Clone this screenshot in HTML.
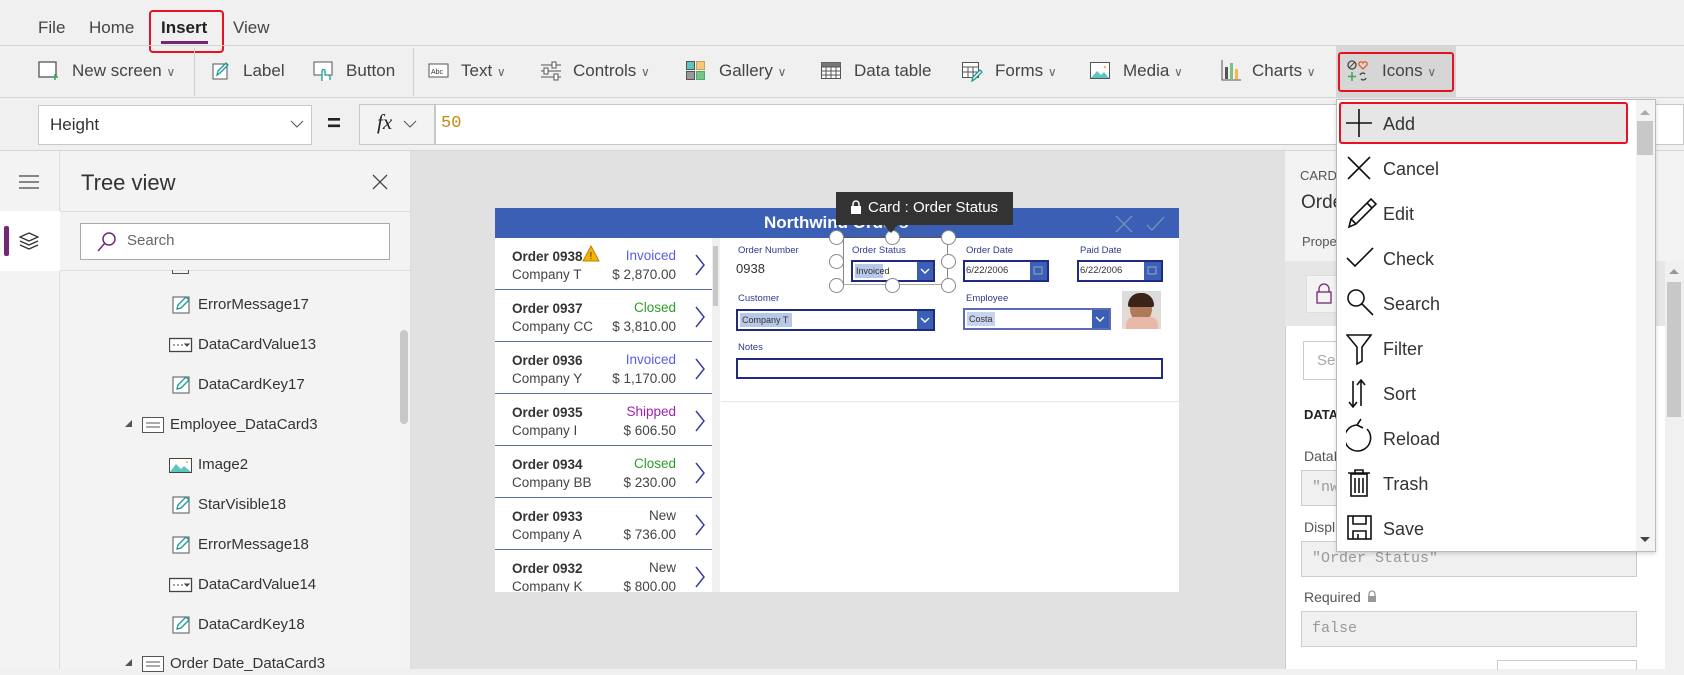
<!DOCTYPE html>
<html><head><meta charset="utf-8"><style>
*{box-sizing:border-box;margin:0;padding:0}
body{width:1684px;height:669px;overflow:hidden;background:#f0f0f0;font-family:"Liberation Sans",sans-serif;color:#333;position:relative}
.a{position:absolute}
.t{position:absolute;white-space:nowrap}
.tb{font-size:17px;color:#444;top:61px}
.chev{font-size:12px;color:#666}
.row{position:absolute;left:495px;width:217px;height:52px;border-bottom:1px solid #5c6bb0;background:#fff}
.row .o{position:absolute;left:17px;top:11px;font-size:13.5px;font-weight:bold;color:#333}
.row .c{position:absolute;left:17px;top:29px;font-size:13.5px;color:#444}
.row .s{position:absolute;right:36px;top:10px;font-size:13.5px}
.row .p{position:absolute;right:36px;top:29px;font-size:13.5px;color:#444}
.row svg{position:absolute;right:6px;top:16px}
.lbl{position:absolute;font-size:9.5px;color:#2d3a8c}
.box{position:absolute;border:2px solid #1f2a80;background:#fff}
.btn{position:absolute;background:#3a5fb5;top:0;bottom:0;right:0}
.h{position:absolute;width:15px;height:15px;border-radius:50%;border:1.5px solid #888;background:#fff}
.tree{position:absolute;font-size:15px;color:#333}
.dd{position:absolute;left:1383px;font-size:18px;color:#333}
.rp{position:absolute;font-size:14px;color:#555}
.inp{position:absolute;left:1301px;width:336px;height:36px;background:#f0f0f0;border:1px solid #ccc;font-family:"Liberation Mono",monospace;font-size:15px;color:#999;padding:8px 10px}
</style></head><body>
<!-- menu -->
<div class="t" style="left:38px;top:18px;font-size:17px;color:#444">File</div>
<div class="t" style="left:89px;top:18px;font-size:17px;color:#444">Home</div>
<div class="t" style="left:161px;top:18px;font-size:17px;color:#222;font-weight:bold">Insert</div>
<div class="t" style="left:233px;top:18px;font-size:17px;color:#444">View</div>
<div class="a" style="left:161px;top:41px;width:47px;height:3px;background:#742774"></div>
<div class="a" style="left:149px;top:10px;width:75px;height:43px;border:2px solid #e81123;border-radius:4px"></div>
<div class="a" style="left:0;top:45px;width:1684px;height:1px;background:#d6d6d6"></div>
<!-- toolbar -->
<div class="a" style="left:194px;top:48px;width:1px;height:48px;background:#d0d0d0"></div>
<div class="a" style="left:413px;top:48px;width:1px;height:48px;background:#d0d0d0"></div>
<svg class="a" style="left:38px;top:61px" width="22" height="20"><rect x="1" y="1" width="17" height="15" fill="#fff" stroke="#555" stroke-width="1.3"/><path d="M17 13v6M14 16h6" stroke="#3ba55c" stroke-width="1.5"/></svg>
<div class="t tb" style="left:72px">New screen <span class="chev">∨</span></div>
<svg class="a" style="left:212px;top:61px" width="18" height="19"><rect x="1" y="3" width="14" height="15" fill="#fff" stroke="#555"/><path d="M5 14l1-4 8-8 2 2-8 8z" fill="none" stroke="#1a9a94" stroke-width="1.3"/></svg>
<div class="t tb" style="left:243px">Label</div>
<svg class="a" style="left:313px;top:61px" width="22" height="22"><rect x="1" y="1" width="18" height="13" fill="#fff" stroke="#555"/><path d="M9 20v-10a1.5 1.5 0 013 0v4h3a2 2 0 012 2v3" fill="#fff" stroke="#1a9a94" stroke-width="1.3"/></svg>
<div class="t tb" style="left:346px">Button</div>
<svg class="a" style="left:428px;top:63px" width="22" height="16"><rect x="1" y="1" width="19" height="13" fill="#fff" stroke="#555"/><text x="3" y="11" font-size="7" fill="#333" font-family="Liberation Sans">Abc</text></svg>
<div class="t tb" style="left:461px">Text <span class="chev">∨</span></div>
<svg class="a" style="left:540px;top:61px" width="22" height="20"><path d="M1 4h20M1 10h20M1 16h20" stroke="#555"/><rect x="12" y="1" width="4" height="6" fill="#fff" stroke="#555"/><rect x="4" y="7" width="4" height="6" fill="#fff" stroke="#555"/><rect x="14" y="13" width="4" height="6" fill="#fff" stroke="#555"/></svg>
<div class="t tb" style="left:573px">Controls <span class="chev">∨</span></div>
<svg class="a" style="left:686px;top:61px" width="20" height="20"><rect x="0.5" y="0.5" width="8" height="8" fill="#5bc6c0" stroke="#555"/><rect x="10.5" y="0.5" width="8" height="8" fill="#f8c77e" stroke="#c9a060"/><rect x="0.5" y="10.5" width="8" height="8" fill="#999" stroke="#555"/><rect x="10.5" y="10.5" width="8" height="8" fill="#7cc47e" stroke="#4a8"/></svg>
<div class="t tb" style="left:719px">Gallery <span class="chev">∨</span></div>
<svg class="a" style="left:821px;top:62px" width="20" height="18"><rect x="0.5" y="0.5" width="19" height="16" fill="#fff" stroke="#555"/><path d="M0 5h20M0 9h20M0 13h20M5 5v12M10 5v12M15 5v12" stroke="#555"/><rect x="0.5" y="0.5" width="19" height="4" fill="#777"/></svg>
<div class="t tb" style="left:854px">Data table</div>
<svg class="a" style="left:962px;top:62px" width="22" height="20"><rect x="0.5" y="0.5" width="16" height="15" fill="#fff" stroke="#555"/><path d="M0 5h17M0 10h17M6 5v11M11 5v11" stroke="#555"/><path d="M10 19l1-4 7-7 2 2-7 7z" fill="#fff" stroke="#1a9a94" stroke-width="1.3"/></svg>
<div class="t tb" style="left:995px">Forms <span class="chev">∨</span></div>
<svg class="a" style="left:1090px;top:62px" width="21" height="18"><rect x="0.5" y="0.5" width="19" height="16" fill="#fff" stroke="#555"/><path d="M1 16l6-7 4 4 3-3 5 6z" fill="#5bc6c0"/><circle cx="15" cy="5" r="1.2" fill="#f8b44e"/></svg>
<div class="t tb" style="left:1123px">Media <span class="chev">∨</span></div>
<svg class="a" style="left:1221px;top:60px" width="20" height="21"><path d="M1 0v20h19" stroke="#555" fill="none"/><rect x="4" y="7" width="3" height="12" fill="#555"/><rect x="9" y="3" width="3" height="16" fill="#7cc47e"/><rect x="14" y="9" width="3" height="10" fill="#f8b44e"/></svg>
<div class="t tb" style="left:1252px">Charts <span class="chev">∨</span></div>
<div class="a" style="left:1336px;top:46px;width:120px;height:51px;background:#d6d6d6"></div>
<div class="a" style="left:1338px;top:52px;width:116px;height:40px;border:2px solid #e81123;border-radius:3px"></div>
<svg class="a" style="left:1347px;top:60px" width="22" height="22"><circle cx="5" cy="5" r="4" fill="none" stroke="#444" stroke-width="1.3"/><path d="M2 8l6-6" stroke="#444"/><path d="M16 9l-4-4a2 2 0 014-2 2 2 0 014 2z" fill="none" stroke="#e85c2c" stroke-width="1.3"/><path d="M5 12v9M1 16.5h8" stroke="#3ba55c" stroke-width="1.5"/><path d="M13 15a3 3 0 015-1M19 18a3 3 0 01-5 1" fill="none" stroke="#444" stroke-width="1.3"/></svg>
<div class="t tb" style="left:1382px">Icons <span class="chev">∨</span></div>
<div class="a" style="left:0;top:97px;width:1684px;height:1px;background:#d6d6d6"></div>
<!-- formula bar -->
<div class="a" style="left:38px;top:105px;width:274px;height:40px;background:#fff;border:1px solid #c8c8c8"></div>
<div class="t" style="left:50px;top:115px;font-size:17px;color:#333">Height</div>
<svg class="a" style="left:290px;top:119px" width="14" height="10"><path d="M1 2l6 6 6-6" fill="none" stroke="#555"/></svg>
<div class="t" style="left:327px;top:110px;font-size:24px;font-weight:bold;color:#222">=</div>
<div class="a" style="left:359px;top:104px;width:76px;height:41px;background:#f3f3f3;border:1px solid #c8c8c8"></div>
<div class="t" style="left:377px;top:110px;font-size:21px;font-style:italic;font-family:'Liberation Serif',serif;color:#222">fx</div>
<svg class="a" style="left:403px;top:119px" width="14" height="10"><path d="M1 2l6 6 6-6" fill="none" stroke="#555"/></svg>
<div class="a" style="left:435px;top:104px;width:1249px;height:41px;background:#fff;border:1px solid #c8c8c8"></div>
<div class="t" style="left:441px;top:114px;font-size:17px;color:#c58a12;font-family:'Liberation Mono',monospace">50</div>
<div class="a" style="left:0;top:150px;width:1684px;height:1px;background:#d6d6d6"></div>
<!-- left strip -->
<div class="a" style="left:0;top:151px;width:60px;height:518px;background:#f3f3f3;border-right:1px solid #ddd"></div>
<div class="a" style="left:0;top:211px;width:60px;height:60px;background:#fff"></div>
<div class="a" style="left:4px;top:226px;width:5px;height:30px;background:#742774;border-radius:2px"></div>
<svg class="a" style="left:18px;top:175px" width="22" height="14"><path d="M1 1h20M1 7h20M1 13h20" stroke="#444" stroke-width="1.2"/></svg>
<svg class="a" style="left:19px;top:232px" width="20" height="18"><path d="M10 1l9 4-9 4-9-4z M1 9l9 4 9-4 M1 13l9 4 9-4" fill="none" stroke="#333" stroke-width="1.3"/></svg>
<!-- tree panel -->
<div class="a" style="left:60px;top:151px;width:351px;height:518px;background:#f3f3f3;border-right:1px solid #ddd"></div>
<div class="t" style="left:81px;top:170px;font-size:22px;color:#333">Tree view</div>
<svg class="a" style="left:372px;top:174px" width="16" height="16"><path d="M1 1l14 14M15 1l-14 14" stroke="#444" stroke-width="1.3"/></svg>
<div class="a" style="left:60px;top:211px;width:351px;height:1px;background:#ddd"></div>
<div class="a" style="left:80px;top:223px;width:310px;height:37px;background:#fff;border:1px solid #aaa"></div>
<svg class="a" style="left:96px;top:231px" width="22" height="22"><circle cx="13" cy="8" r="6" fill="none" stroke="#742774" stroke-width="1.5"/><path d="M9 12l-7 8" stroke="#742774" stroke-width="1.5"/></svg>
<div class="t" style="left:127px;top:232px;font-size:15px;color:#666">Search</div>
<div class="a" style="left:60px;top:270px;width:350px;height:1px;background:#ddd"></div>
<div class="a" style="left:172px;top:270px;width:17px;height:4px;border:1px solid #555;border-top:none"></div>
<div class="a" style="left:400px;top:330px;width:8px;height:94px;background:#c8c8c8;border-radius:4px"></div>
<svg width="0" height="0" style="position:absolute"><defs>
<g id="ed"><rect x="1" y="3" width="16" height="16" fill="#fff" stroke="#555"/><path d="M5 15l1-4 8-8 3 3-8 8z" fill="#fff" stroke="#1a9a94" stroke-width="1.3"/></g>
<g id="dv"><rect x="0.5" y="4.5" width="22" height="13" fill="#fff" stroke="#444" stroke-width="1.3"/><path d="M4 11h2M8 11h2M12 11h2M16 10h4l-2 2z" stroke="#444" fill="#444"/></g>
<g id="cd"><rect x="0.5" y="3.5" width="21" height="15" fill="#fff" stroke="#555"/><path d="M4 9h14M4 13h14" stroke="#555"/></g>
<g id="im"><rect x="0.5" y="4.5" width="22" height="14" fill="#fff" stroke="#444"/><path d="M1 18l6-8 5 5 3-3 7 6z" fill="#5bc6c0"/><circle cx="18" cy="8" r="1" fill="#f8b44e"/></g>
</defs></svg>
<svg class="a" style="left:172px;top:294px" width="24" height="22"><use href="#ed"/></svg><div class="tree" style="left:198px;top:296px">ErrorMessage17</div>
<svg class="a" style="left:169px;top:334px" width="24" height="22"><use href="#dv"/></svg><div class="tree" style="left:198px;top:336px">DataCardValue13</div>
<svg class="a" style="left:172px;top:374px" width="24" height="22"><use href="#ed"/></svg><div class="tree" style="left:198px;top:376px">DataCardKey17</div>
<svg class="a" style="left:125px;top:420px" width="8" height="8"><path d="M7 0v7h-7z" fill="#555"/></svg>
<svg class="a" style="left:142px;top:414px" width="24" height="22"><use href="#cd"/></svg><div class="tree" style="left:170px;top:416px">Employee_DataCard3</div>
<svg class="a" style="left:169px;top:454px" width="24" height="22"><use href="#im"/></svg><div class="tree" style="left:198px;top:456px">Image2</div>
<svg class="a" style="left:172px;top:494px" width="24" height="22"><use href="#ed"/></svg><div class="tree" style="left:198px;top:496px">StarVisible18</div>
<svg class="a" style="left:172px;top:534px" width="24" height="22"><use href="#ed"/></svg><div class="tree" style="left:198px;top:536px">ErrorMessage18</div>
<svg class="a" style="left:169px;top:574px" width="24" height="22"><use href="#dv"/></svg><div class="tree" style="left:198px;top:576px">DataCardValue14</div>
<svg class="a" style="left:172px;top:614px" width="24" height="22"><use href="#ed"/></svg><div class="tree" style="left:198px;top:616px">DataCardKey18</div>
<svg class="a" style="left:125px;top:659px" width="8" height="8"><path d="M7 0v7h-7z" fill="#555"/></svg>
<svg class="a" style="left:142px;top:653px" width="24" height="22"><use href="#cd"/></svg><div class="tree" style="left:170px;top:655px">Order Date_DataCard3</div>
<!-- canvas -->
<div class="a" style="left:411px;top:151px;width:874px;height:518px;background:#e1e1e1"></div>
<div class="a" style="left:495px;top:208px;width:684px;height:384px;background:#fff"></div>
<div class="a" style="left:495px;top:208px;width:684px;height:30px;background:#3a5fb5"></div>
<div class="t" style="left:764px;top:213px;font-size:17px;font-weight:bold;color:#fff">Northwind Orders</div>
<svg class="a" style="left:1114px;top:214px" width="56" height="20"><path d="M2 2l16 16M18 2l-16 16" stroke="#7a8fb8" stroke-width="1.3"/><path d="M33 11l5 5 12-13" fill="none" stroke="#7a8fb8" stroke-width="1.3"/></svg>
<div class="row" style="top:238px"><div class="o">Order 0938</div><div class="c">Company T</div><div class="s" style="color:#5b5bf0">Invoiced</div><div class="p">$ 2,870.00</div><svg width="12" height="22"><path d="M2 1l8 10-8 10" fill="none" stroke="#3a3f9a" stroke-width="1.5"/></svg></div>
<svg class="a" style="left:582px;top:245px" width="18" height="17"><path d="M9 1l8 15h-16z" fill="#f4b400" stroke="#c08000"/><text x="7.5" y="14" font-size="10" fill="#333">!</text></svg>
<div class="row" style="top:290px"><div class="o">Order 0937</div><div class="c">Company CC</div><div class="s" style="color:#2aa02a">Closed</div><div class="p">$ 3,810.00</div><svg width="12" height="22"><path d="M2 1l8 10-8 10" fill="none" stroke="#3a3f9a" stroke-width="1.5"/></svg></div>
<div class="row" style="top:342px"><div class="o">Order 0936</div><div class="c">Company Y</div><div class="s" style="color:#5b5bf0">Invoiced</div><div class="p">$ 1,170.00</div><svg width="12" height="22"><path d="M2 1l8 10-8 10" fill="none" stroke="#3a3f9a" stroke-width="1.5"/></svg></div>
<div class="row" style="top:394px"><div class="o">Order 0935</div><div class="c">Company I</div><div class="s" style="color:#a020b0">Shipped</div><div class="p">$ 606.50</div><svg width="12" height="22"><path d="M2 1l8 10-8 10" fill="none" stroke="#3a3f9a" stroke-width="1.5"/></svg></div>
<div class="row" style="top:446px"><div class="o">Order 0934</div><div class="c">Company BB</div><div class="s" style="color:#2aa02a">Closed</div><div class="p">$ 230.00</div><svg width="12" height="22"><path d="M2 1l8 10-8 10" fill="none" stroke="#3a3f9a" stroke-width="1.5"/></svg></div>
<div class="row" style="top:498px"><div class="o">Order 0933</div><div class="c">Company A</div><div class="s" style="color:#444">New</div><div class="p">$ 736.00</div><svg width="12" height="22"><path d="M2 1l8 10-8 10" fill="none" stroke="#3a3f9a" stroke-width="1.5"/></svg></div>
<div class="row" style="top:550px;height:42px;overflow:hidden;border:none"><div class="o">Order 0932</div><div class="c">Company K</div><div class="s" style="color:#444">New</div><div class="p">$ 800.00</div><svg width="12" height="22"><path d="M2 1l8 10-8 10" fill="none" stroke="#3a3f9a" stroke-width="1.5"/></svg></div>
<div class="a" style="left:712px;top:238px;width:8px;height:354px;background:#f0f0f0"></div>
<div class="a" style="left:713px;top:246px;width:5px;height:60px;background:#c8c8c8"></div>
<!-- form -->
<div class="lbl" style="left:738px;top:245px">Order Number</div>
<div class="t" style="left:736px;top:261px;font-size:13px;color:#333">0938</div>
<div class="lbl" style="left:852px;top:245px">Order Status</div>
<div class="box" style="left:851px;top:260px;width:84px;height:22px"><div class="a" style="left:2px;top:2px;width:28px;height:14px;background:#b8c8e8;font-size:9px;padding:2px 1px;color:#333">Invoiced</div><div class="btn" style="width:16px"><svg width="16" height="18"><path d="M4 7l4 4 4-4" fill="none" stroke="#fff" stroke-width="1.4"/></svg></div></div>
<div class="lbl" style="left:966px;top:245px">Order Date</div>
<div class="box" style="left:963px;top:260px;width:86px;height:22px"><div class="a" style="left:1px;top:3px;font-size:9.5px;color:#333">6/22/2006</div><div class="btn" style="width:17px"><svg width="17" height="18"><rect x="4" y="5" width="8" height="7" fill="none" stroke="#9ab"/></svg></div></div>
<div class="lbl" style="left:1080px;top:245px">Paid Date</div>
<div class="box" style="left:1077px;top:260px;width:86px;height:22px"><div class="a" style="left:1px;top:3px;font-size:9.5px;color:#333">6/22/2006</div><div class="btn" style="width:17px"><svg width="17" height="18"><rect x="4" y="5" width="8" height="7" fill="none" stroke="#9ab"/></svg></div></div>
<div class="lbl" style="left:738px;top:293px">Customer</div>
<div class="box" style="left:736px;top:309px;width:199px;height:22px"><div class="a" style="left:2px;top:2px;width:52px;height:14px;background:#b8c8e8;font-size:9px;padding:2px 2px;color:#333">Company T</div><div class="btn" style="width:16px"><svg width="16" height="18"><path d="M4 7l4 4 4-4" fill="none" stroke="#fff" stroke-width="1.4"/></svg></div></div>
<div class="lbl" style="left:966px;top:293px">Employee</div>
<div class="box" style="left:963px;top:308px;width:148px;height:22px;border-color:#5b6bb8"><div class="a" style="left:2px;top:2px;width:28px;height:14px;background:#c8d4ec;font-size:9px;padding:2px 2px;color:#333">Costa</div><div class="btn" style="width:17px"><svg width="17" height="18"><path d="M4 7l4 4 4-4" fill="none" stroke="#fff" stroke-width="1.4"/></svg></div></div>
<div class="a" style="left:1122px;top:291px;width:39px;height:38px;background:linear-gradient(#d8dde0,#e8d8d0)"></div>
<div class="a" style="left:1130px;top:296px;width:22px;height:26px;border-radius:50%;background:#b07a58"></div>
<div class="a" style="left:1126px;top:317px;width:32px;height:12px;border-radius:8px 8px 0 0;background:#e8b8a8"></div>
<div class="a" style="left:1128px;top:293px;width:26px;height:14px;border-radius:13px 13px 2px 2px;background:#3a2418"></div>
<div class="lbl" style="left:738px;top:342px">Notes</div>
<div class="box" style="left:736px;top:358px;width:427px;height:21px"></div>
<div class="a" style="left:721px;top:401px;width:458px;height:1px;background:#e6e6e6"></div>
<!-- selection -->
<div class="a" style="left:843px;top:237px;width:105px;height:48px;border:1.5px solid #888;border-top-color:#555;border-bottom-color:#aaa"></div>
<div class="h" style="left:829px;top:230px"></div><div class="h" style="left:885px;top:230px"></div><div class="h" style="left:941px;top:230px"></div>
<div class="h" style="left:829px;top:254px"></div><div class="h" style="left:941px;top:254px"></div>
<div class="h" style="left:829px;top:278px"></div><div class="h" style="left:885px;top:278px"></div><div class="h" style="left:941px;top:278px"></div>
<div class="a" style="left:836px;top:192px;width:177px;height:33px;background:#333"></div>
<div class="a" style="left:884px;top:225px;width:0;height:0;border-left:7px solid transparent;border-right:7px solid transparent;border-top:8px solid #333"></div>
<svg class="a" style="left:850px;top:199px" width="12" height="16"><path d="M3 7V5a3 3 0 016 0v2" fill="none" stroke="#fff" stroke-width="1.5"/><rect x="1" y="7" width="10" height="8" fill="#fff"/></svg>
<div class="t" style="left:868px;top:199px;font-size:15px;color:#fff">Card : Order Status</div>
<!-- right panel -->
<div class="a" style="left:1285px;top:151px;width:399px;height:518px;background:#fff;border-left:1px solid #ccc"></div>
<div class="a" style="left:1285px;top:151px;width:399px;height:110px;background:#f3f3f3"></div>
<div class="rp" style="left:1300px;top:168px;font-size:13px">CARD</div>
<div class="rp" style="left:1301px;top:192px;font-size:19px;color:#333">Orde</div>
<div class="rp" style="left:1302px;top:234px;font-size:13px">Prope</div>
<div class="a" style="left:1285px;top:261px;width:380px;height:65px;background:#e6e6e6"></div>
<div class="a" style="left:1306px;top:275px;width:40px;height:38px;background:#f3f3f3;border:1px solid #ddd"></div>
<svg class="a" style="left:1316px;top:283px" width="16" height="22"><path d="M3 9V6a5 5 0 0110 0v3" fill="none" stroke="#742774" stroke-width="1.3"/><rect x="1" y="9" width="14" height="11" fill="none" stroke="#742774" stroke-width="1.3"/></svg>
<div class="a" style="left:1303px;top:341px;width:60px;height:39px;border:1px solid #ccc;background:#fff"></div>
<div class="rp" style="left:1317px;top:352px;font-size:15px;color:#aaa">Sea</div>
<div class="rp" style="left:1304px;top:407px;font-size:13px;color:#222;font-weight:bold">DATA</div>
<div class="rp" style="left:1304px;top:448px">DataF</div>
<div class="inp" style="top:470px">"nw</div>
<div class="rp" style="left:1304px;top:519px">Displ</div>
<div class="inp" style="top:541px">"Order Status"</div>
<div class="rp" style="left:1304px;top:589px">Required</div>
<svg class="a" style="left:1367px;top:590px" width="10" height="13"><path d="M2 6V4a3 3 0 016 0v2" fill="none" stroke="#999" stroke-width="1.3"/><rect x="1" y="6" width="8" height="6" fill="#999"/></svg>
<div class="inp" style="top:611px">false</div>
<div class="a" style="left:1497px;top:660px;width:140px;height:10px;border:1px solid #ccc;border-bottom:none"></div>
<div class="a" style="left:1665px;top:261px;width:19px;height:408px;background:#f0f0f0"></div>
<div class="a" style="left:1667px;top:282px;width:14px;height:135px;background:#c8c8c8"></div>
<svg class="a" style="left:1669px;top:268px" width="10" height="6"><path d="M0 6l5-5 5 5z" fill="#999"/></svg>
<!-- dropdown -->
<div class="a" style="left:1336px;top:99px;width:320px;height:453px;background:#fff;border:1px solid #bbb;box-shadow:0 2px 4px rgba(0,0,0,.15)"></div>
<div class="a" style="left:1339px;top:102px;width:289px;height:42px;background:#e6e6e6;border:2px solid #e81123;border-radius:3px"></div>
<div class="a" style="left:1636px;top:100px;width:19px;height:451px;background:#f3f3f3"></div>
<div class="a" style="left:1637px;top:121px;width:16px;height:34px;background:#c8c8c8"></div>
<svg class="a" style="left:1640px;top:109px" width="10" height="6"><path d="M0 6l5-5 5 5z" fill="#aaa"/></svg>
<svg class="a" style="left:1640px;top:537px" width="10" height="6"><path d="M0 0l5 5 5-5z" fill="#444"/></svg>
<svg class="a" style="left:1346px;top:108px" width="32" height="440" fill="none" stroke="#111" stroke-width="1.6">
<path d="M13 1v28M0 15h26"/>
<path d="M2 49l22 22M24 49l-22 22"/>
<path d="M3 119l2-8 20-20 5 5-20 20zM5 111l5 5M21 95l5 5"/>
<path d="M1 150l8 8 18-18"/>
<circle cx="10" cy="190" r="8"/><path d="M16 196l11 11"/>
<path d="M1 227h24l-9 12v14l-5 3v-17z"/>
<path d="M7 273v25M3 294l4 5 4-5M15 298v-25M11 277l4-5 4 5"/>
<path d="M21 321a13 13 0 11-10-4M11 317l4-6M11 317l6 3"/>
<rect x="5" y="366" width="16" height="22"/><path d="M2 365h22M9 365v-3h8v3M9 370v15M13 370v15M17 370v15"/>
<rect x="2" y="408" width="23" height="23"/><path d="M7 408v8h13v-8M7 431v-8h13v8M12 426v5"/>
</svg>
<div class="dd" style="top:114px">Add</div>
<div class="dd" style="top:159px">Cancel</div>
<div class="dd" style="top:204px">Edit</div>
<div class="dd" style="top:249px">Check</div>
<div class="dd" style="top:294px">Search</div>
<div class="dd" style="top:339px">Filter</div>
<div class="dd" style="top:384px">Sort</div>
<div class="dd" style="top:429px">Reload</div>
<div class="dd" style="top:474px">Trash</div>
<div class="dd" style="top:519px">Save</div>
</body></html>
